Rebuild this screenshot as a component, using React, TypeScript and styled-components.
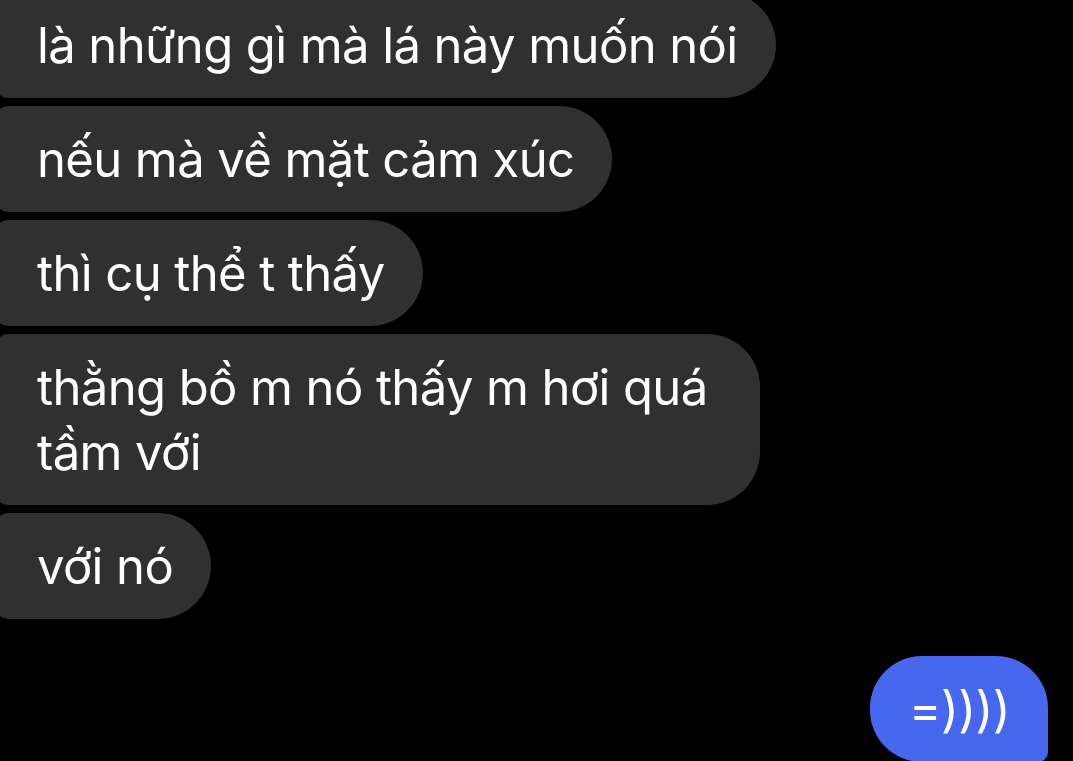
import React from "react";
import styled, { createGlobalStyle } from "styled-components";

const Global = createGlobalStyle`
  html, body { margin: 0; padding: 0; background: #000; }
  body { overflow: hidden; width: 1073px; height: 761px; }
`;

const Screen = styled.div`
  width: 1073px;
  height: 761px;
  background: #000;
  overflow: hidden;
  font-family: Inter, "Noto Sans", sans-serif;
`;

const Thread = styled.div`
  display: flex;
  flex-direction: column;
  gap: 8px;
  margin-top: -8px;
`;

const Bubble = styled.div<{ $me?: boolean; $max?: number }>`
  box-sizing: border-box;
  width: fit-content;
  max-width: ${(p) => (p.$max ? `${p.$max}px` : "790px")};
  padding: ${(p) => (p.$me ? "21px 38px 20px 39px" : "21px 38px 20px 41px")};
  margin-left: ${(p) => (p.$me ? "auto" : "-4px")};
  margin-right: ${(p) => (p.$me ? "25px" : "0")};
  margin-top: ${(p) => (p.$me ? "29px" : "0")};
  background: ${(p) => (p.$me ? "#4768ee" : "#303030")};
  color: #fff;
  font-size: 49px;
  line-height: 65px;
  letter-spacing: -0.6px;
  border-radius: ${(p) => (p.$me ? "52px 52px 10px 52px" : "12px 53px 53px 12px")};
`;

const messages: { text: string; max?: number }[] = [
  { text: "là những gì mà lá này muốn nói" },
  { text: "nếu mà về mặt cảm xúc" },
  { text: "thì cụ thể t thấy" },
  { text: "thằng bồ m nó thấy m hơi quá tầm với", max: 764 },
  { text: "với nó" },
];

export default function App() {
  return (
    <Screen>
      <Global />
      <Thread>
        {messages.map((m) => (
          <Bubble key={m.text} $max={m.max}>
            {m.text}
          </Bubble>
        ))}
        <Bubble $me>=))))</Bubble>
      </Thread>
    </Screen>
  );
}
